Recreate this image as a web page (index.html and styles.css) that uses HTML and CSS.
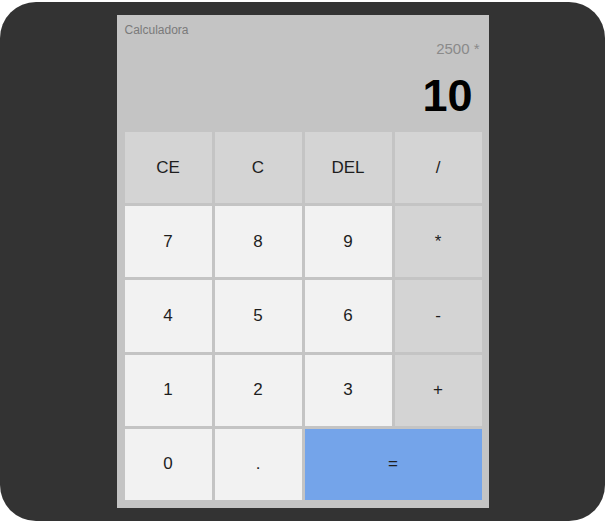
FILE: index.html
```html
<!DOCTYPE html>
<html lang="es">
<head>
<meta charset="utf-8">
<title>Calculadora</title>
<link rel="stylesheet" href="styles.css">
</head>
<body>
<div class="screen">
  <div class="calc">
    <div class="display">
      <div class="title">Calculadora</div>
      <div class="prev">2500 *</div>
      <div class="current">10</div>
    </div>
    <div class="keys">
      <button class="key fn">CE</button>
      <button class="key fn">C</button>
      <button class="key fn">DEL</button>
      <button class="key fn">/</button>
      <button class="key num">7</button>
      <button class="key num">8</button>
      <button class="key num">9</button>
      <button class="key fn">*</button>
      <button class="key num">4</button>
      <button class="key num">5</button>
      <button class="key num">6</button>
      <button class="key fn">-</button>
      <button class="key num">1</button>
      <button class="key num">2</button>
      <button class="key num">3</button>
      <button class="key fn">+</button>
      <button class="key num">0</button>
      <button class="key num">.</button>
      <button class="key eq">=</button>
    </div>
  </div>
</div>
</body>
</html>
```
FILE: styles.css
```css
* { box-sizing: border-box; }
html, body {
  margin: 0;
  padding: 0;
  background: #ffffff;
  font-family: "Liberation Sans", Arial, sans-serif;
}
.screen {
  margin-top: 2px;
  width: 605px;
  height: 519px;
  border-radius: 36px;
  background: #333333;
  display: flex;
  justify-content: center;
  align-items: center;
}
.calc {
  width: 372px;
  height: 493px;
  background: #c4c4c4;
  padding: 0 7px 8px 8px;
  display: flex;
  flex-direction: column;
}
.display {
  height: 117px;
  display: flex;
  flex-direction: column;
}
.title {
  margin-top: 8px;
  font-size: 12px;
  line-height: 14px;
  color: #7a7a7a;
}
.prev {
  margin-top: 3px;
  font-size: 15px;
  line-height: 17px;
  color: #8a8a8a;
  text-align: right;
  padding-right: 2px;
}
.current {
  margin-top: 15px;
  font-size: 45px;
  line-height: 48px;
  font-weight: bold;
  color: #000;
  text-align: right;
  padding-right: 9px;
}
.keys {
  flex: 1;
  display: grid;
  grid-template-columns: repeat(4, 87px);
  grid-template-rows: repeat(5, 1fr);
  gap: 3px;
}
.key {
  border: none;
  margin: 0;
  padding: 0;
  font-family: "Liberation Sans", Arial, sans-serif;
  font-size: 17px;
  color: #1e1e1e;
}
.fn { background: #d4d4d4; }
.num { background: #f2f2f2; }
.eq {
  grid-column: span 2;
  background: #74a4ea;
}
```
